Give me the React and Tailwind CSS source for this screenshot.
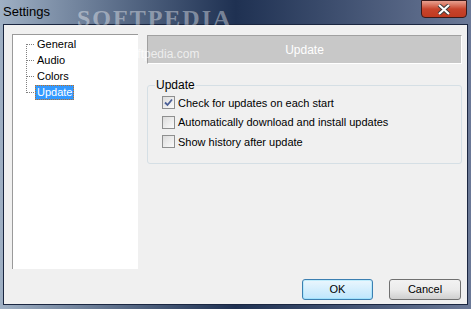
import { useState } from "react";

const font = { fontFamily: '"Liberation Sans", Arial, sans-serif' };

function Checkbox({ checked, label }) {
  return (
    <label className="flex items-center gap-[3px] h-[19.5px] text-[11px] text-black">
      <span className="w-[13px] h-[13px] border border-[#8e8f8f] bg-gradient-to-br from-[#dcdcdc] to-[#fbfbfb] flex items-center justify-center">
        {checked && (
          <svg width="9" height="9" viewBox="0 0 9 9">
            <path d="M1 4.5 L3.5 7 L8 1.5" stroke="#4a5f97" strokeWidth="1.8" fill="none" />
          </svg>
        )}
      </span>
      <span>{label}</span>
    </label>
  );
}

function TreeItem({ label, selected }) {
  return (
    <div className="flex items-center h-[16px]">
      <div className="w-[7px] border-t border-dotted border-[#808080] mr-[1px]" />
      <span
        className={
          selected
            ? "px-[1px] h-[15px] leading-[13px] bg-[#3399ff] text-white border border-dotted border-[#c07020]"
            : "px-[1px] h-[15px] leading-[13px] border border-transparent"
        }
      >
        {label}
      </span>
    </div>
  );
}

export default function App() {
  const [checks] = useState([true, false, false]);
  const labels = [
    "Check for updates on each start",
    "Automatically download and install updates",
    "Show history after update",
  ];

  return (
    <div
      className="w-[471px] h-[309px] flex flex-col bg-gradient-to-r from-[#9fb0c4] via-[#1f3152] to-[#6b7997] relative overflow-hidden"
      style={font}
    >
      {/* title bar */}
      <div className="h-[24px] flex items-start justify-between pl-[3px]">
        <span className="text-[13px] text-black mt-[2px]">Settings</span>
        <button className="w-[46px] h-[18px] mr-[4px] rounded-b-[4px] border border-[#3a1a1a] bg-gradient-to-b from-[#e8a090] via-[#c8442c] to-[#c03a20] flex items-center justify-center">
          <svg width="14" height="11" viewBox="0 0 14 11">
            <path d="M2 1 L12 10 M12 1 L2 10" stroke="#3a3a3a" strokeWidth="4" />
            <path d="M2 1 L12 10 M12 1 L2 10" stroke="#ffffff" strokeWidth="2.2" />
          </svg>
        </button>
      </div>

      {/* client area */}
      <div className="flex-1 mx-[3px] mb-[4px] bg-[#f0f0f0] border border-[#1a2640] flex flex-col text-[11px]">
        <div className="flex pt-[9px] pl-[8px] pr-[5px] gap-[9px]">
          {/* tree */}
          <div className="w-[126px] h-[235px] bg-white border-l border-t border-[#9a9a9a] pt-[2px] pl-[13px] text-black">
            <div className="border-l border-dotted border-[#808080] mt-[7px] h-[49px] relative">
              <div className="absolute -top-[8px] left-0 flex flex-col">
                <TreeItem label="General" />
                <TreeItem label="Audio" />
                <TreeItem label="Colors" />
                <TreeItem label="Update" selected />
              </div>
            </div>
          </div>

          {/* right side */}
          <div className="flex-1 flex flex-col pt-[1px]">
            <div className="h-[29px] bg-[#c8c8c8] border-l border-t border-[#a0a0a0] border-r border-b border-r-white border-b-white flex items-center justify-center text-white text-[12px]">
              Update
            </div>
            <fieldset className="mt-[12px] h-[88px] border border-[#d5dfe5] rounded-[3px] px-[14px] pt-[1px]">
              <legend className="px-[1px] ml-[-7px] text-[12px] text-black">Update</legend>
              <div className="flex flex-col -mt-[2px]">
                {labels.map((l, i) => (
                  <Checkbox key={l} label={l} checked={checks[i]} />
                ))}
              </div>
            </fieldset>
          </div>
        </div>

        <div className="flex justify-end gap-[16px] pr-[6px] mt-[10px]">
          <button className="w-[71px] h-[21px] rounded-[3px] border border-[#3c7fb1] bg-gradient-to-b from-[#eaf6fd] to-[#bee6fd] text-[11px] text-black shadow-[inset_0_0_0_1px_#48d2fb40]">
            OK
          </button>
          <button className="w-[72px] h-[21px] rounded-[3px] border border-[#707070] bg-gradient-to-b from-[#f2f2f2] via-[#ebebeb] to-[#cfcfcf] text-[11px] text-black">
            Cancel
          </button>
        </div>
      </div>

      {/* watermark */}
      <div className="absolute top-[0px] left-[77px] text-[24px] font-bold tracking-[2px] text-white/40 pointer-events-none" style={{ fontFamily: '"Liberation Serif", serif' }}>
        SOFTPEDIA
      </div>
      <div className="absolute top-[45px] left-[96px] text-[12px] text-white/70 pointer-events-none">
        www.softpedia.com
      </div>
    </div>
  );
}
